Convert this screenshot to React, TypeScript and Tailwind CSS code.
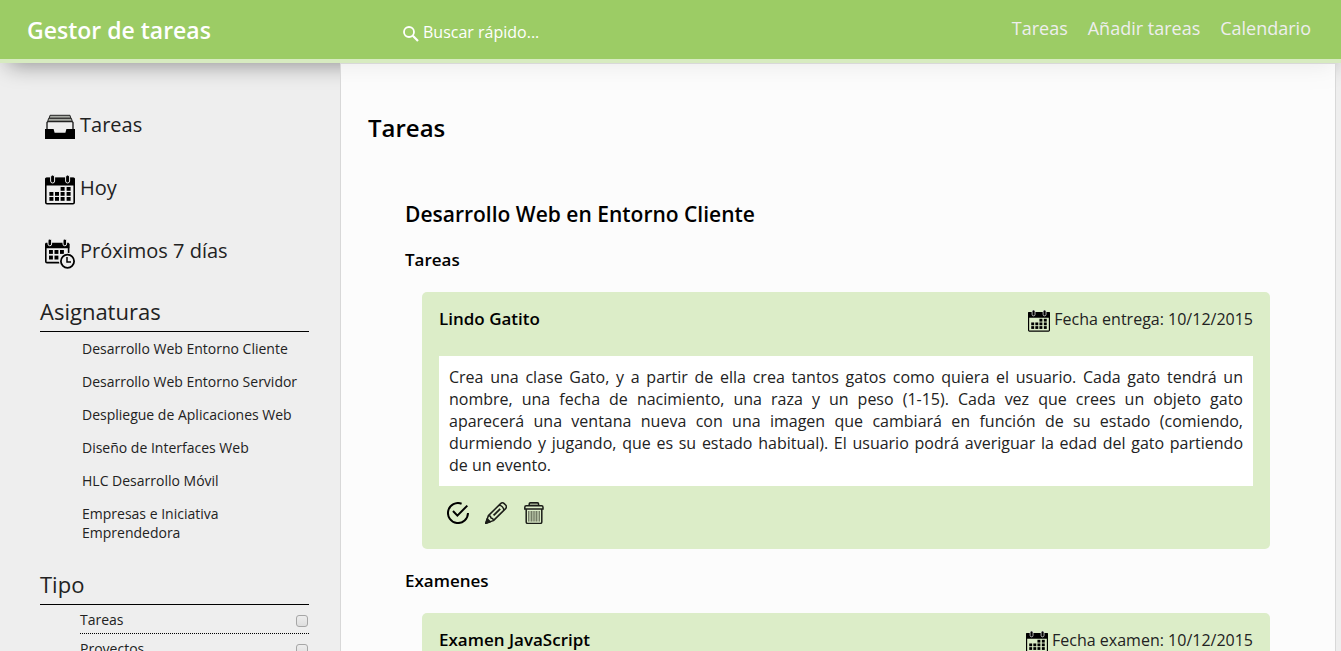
import React from "react";

type IconProps = { className?: string };

function CalendarIcon({ className }: IconProps) {
  const dots = [
    [15.6, 12], [21.6, 12],
    [4.4, 17], [10, 17], [15.6, 17], [21.6, 17],
    [4.4, 22], [10, 22], [15.6, 22], [21.6, 22],
  ];
  return (
    <svg viewBox="0 0 30 30" className={className} aria-hidden="true">
      <rect x="0.8" y="3.5" width="28.4" height="25.2" rx="1.2" fill="none" stroke="#000" strokeWidth="1.6" />
      <path d="M0 10.6V4.2C0 3.2.8 2.6 1.6 2.6h26.8c.9 0 1.6.7 1.6 1.6v6.4z" />
      <rect x="5.6" y="0" width="4" height="8" rx="2" stroke="#eee" strokeWidth="1" />
      <rect x="20.6" y="0" width="4" height="8" rx="2" stroke="#eee" strokeWidth="1" />
      {dots.map(([x, y]) => (
        <rect key={`${x}-${y}`} x={x} y={y} width="4" height="3.8" />
      ))}
    </svg>
  );
}

function WeekIcon({ className }: IconProps) {
  const dots = [[4, 11], [9.5, 11], [15, 11], [4, 16.6], [9.5, 16.6]];
  return (
    <svg viewBox="0 -1 30 30" className={className} overflow="visible" aria-hidden="true">
      <path d="M15 23.6H2A1.2 1.2 0 0 1 .8 22.4V5M23.6 5v9" fill="none" stroke="#000" strokeWidth="1.6" />
      <path d="M0 9.3V5.2c0-.8.6-1.4 1.4-1.4H23c.8 0 1.4.6 1.4 1.4v4.1z" />
      <rect x="3" y="0" width="3.6" height="6.8" rx="1.8" stroke="#eee" />
      <rect x="18" y="0" width="3.6" height="6.8" rx="1.8" stroke="#eee" />
      {dots.map(([x, y]) => (
        <rect key={`${x}-${y}`} x={x} y={y} width="3.9" height="3.9" />
      ))}
      <circle cx="22.5" cy="22.3" r="8.6" fill="#eee" />
      <circle cx="22.5" cy="22.3" r="6.6" fill="none" stroke="#000" strokeWidth="1.8" />
      <path d="M22 18v5h4" fill="none" stroke="#000" strokeWidth="1.5" />
    </svg>
  );
}

function InboxIcon({ className }: IconProps) {
  return (
    <svg viewBox="0 0 30 30" className={className} aria-hidden="true">
      <path d="M5 3.3h20l.8 3H4.2z" fill="#a8aba4" stroke="#222" strokeWidth="1" />
      <path d="M3.6 6.3h22.8l.9 3.4H2.7z" fill="#a8aba4" stroke="#222" strokeWidth="1" />
      <path d="M2 18V10.5l1-1h24l1 1V18" fill="#eee" stroke="#222" strokeWidth="1.4" />
      <path d="M0 17h8.6l1 3.8h10.8l1-3.8H30V27H0z" />
    </svg>
  );
}

function SearchIcon({ className }: IconProps) {
  return (
    <svg viewBox="0 0 16 16" className={className} fill="none" stroke="#fff" aria-hidden="true">
      <circle cx="6" cy="6" r="5" strokeWidth="1.8" />
      <path d="M9.8 9.8l5.2 5.2" strokeWidth="2.2" />
    </svg>
  );
}

function CheckIcon({ className }: IconProps) {
  return (
    <svg viewBox="0 0 22 22" className={className} fill="none" stroke="#000" strokeWidth="2" aria-hidden="true">
      <path d="M14.6 1.7A10 10 0 1 0 21 11" />
      <path d="M6 9l4.4 4.6L20.3 3.6" />
    </svg>
  );
}

function PencilIcon({ className }: IconProps) {
  return (
    <svg viewBox="0 0 22 22" className={className} fill="none" stroke="#1b1d18" strokeWidth="1.5" strokeLinejoin="round" aria-hidden="true">
      <path d="M.8 21.2l2.6-7.6L15.6 1.6c1-1 2.6-1 3.6 0l1.4 1.4c1 1 1 2.6 0 3.6L8.4 18.6z" />
      <path d="M3.4 13.6l2 .6.6 1.8 1.8.6.6 2M14 3.2c2.4.2 4.6 2.4 4.8 4.8" />
      <path d="M8.6 13.4l6.6-6.6" strokeWidth="1.8" />
      <path d="M.8 21.2l1.4-4.4 3 3z" fill="#1b1d18" />
    </svg>
  );
}

function TrashIcon({ className }: IconProps) {
  return (
    <svg viewBox="0 0 22 22" className={className} fill="none" stroke="#1b1d18" strokeWidth="1.5" aria-hidden="true">
      <path d="M6.2 3.8V2c0-.7.5-1.2 1.2-1.2h7c.7 0 1.2.5 1.2 1.2v1.8" fill="#98a38a" />
      <path d="M1.8 7V5.2c0-.9.6-1.4 1.4-1.4h15.4c.9 0 1.4.6 1.4 1.4V7z" />
      <path d="M3.2 7v13c0 .8.6 1.4 1.4 1.4h12.8c.8 0 1.4-.6 1.4-1.4V7" />
      <rect x="5" y="9" width="12" height="10.6" fill="#a9b599" stroke="none" />
      <path d="M5.5 9v10.4M8.5 9v10.4M11 9v10.4M13.5 9v10.4M16.5 9v10.4" stroke="#747d67" strokeWidth="1" />
    </svg>
  );
}

const shortcuts = [
  { label: "Tareas", Icon: InboxIcon },
  { label: "Hoy", Icon: CalendarIcon },
  { label: "Próximos 7 días", Icon: WeekIcon },
];

const subjects = [
  "Desarrollo Web Entorno Cliente",
  "Desarrollo Web Entorno Servidor",
  "Despliegue de Aplicaciones Web",
  "Diseño de Interfaces Web",
  "HLC Desarrollo Móvil",
  "Empresas e Iniciativa Emprendedora",
];

const types = ["Tareas", "Proyectos"];

type TaskProps = { title: string; dateLabel: string; children?: React.ReactNode };

function TaskCard({ title, dateLabel, children }: TaskProps) {
  return (
    <article className="mt-5 ml-[17px] rounded-[5px] bg-[#dcedc8] px-[17px] pt-4 pb-[25px]">
      <header className="flex h-[22px] items-start justify-between leading-[22px]">
        <h4 className="text-[17px] font-semibold text-black">{title}</h4>
        <p className="flex gap-1">
          <CalendarIcon className="mt-0.5 size-[22px]" />
          {dateLabel}
        </p>
      </header>
      {children && (
        <p className="mt-[26px] bg-white p-2.5 text-justify leading-[22px]">{children}</p>
      )}
      <div className="mt-4 flex gap-4 pl-2">
        <button type="button" aria-label="Completar"><CheckIcon className="size-[22px]" /></button>
        <button type="button" aria-label="Editar"><PencilIcon className="size-[22px]" /></button>
        <button type="button" aria-label="Borrar"><TrashIcon className="size-[22px]" /></button>
      </div>
    </article>
  );
}

export default function App() {
  return (
    <div className="flex h-screen flex-col overflow-hidden bg-[#eee] font-['Open_Sans',sans-serif] text-base font-normal text-[#222]">
      <header className="flex h-[63px] shrink-0 items-center border-b-4 border-[#d7ebc0] bg-[#9ccc65] pr-[30px] shadow-[0_10px_22px_-8px_rgba(0,0,0,0.4)]">
        <div className="w-[403px] pl-[27px] text-[23px] leading-8 font-semibold text-white">Gestor de tareas</div>
        <label className="flex items-center gap-1 pt-1">
          <SearchIcon className="mt-1 size-4" />
          <input
            type="search"
            aria-label="Buscar"
            placeholder="Buscar rápido..."
            className="w-48 bg-transparent text-white outline-none placeholder:text-white placeholder:opacity-100"
          />
        </label>
        <nav className="ml-auto flex gap-5 pb-1 text-lg text-[#eee]">
          <a href="#tareas">Tareas</a>
          <a href="#nueva">Añadir tareas</a>
          <a href="#calendario">Calendario</a>
        </nav>
      </header>

      <div className="flex min-h-0 flex-1">
        <aside className="w-[340px] shrink-0 overflow-y-auto pt-[49px] pr-[31px] pl-10 [scrollbar-width:none]">
          <ul className="flex flex-col gap-[33px] pl-[5px]">
            {shortcuts.map(({ label, Icon }) => (
              <li key={label}>
                <a href="#lista" className="flex gap-[5px] text-xl leading-[26px]">
                  <Icon className="size-[30px]" />
                  {label}
                </a>
              </li>
            ))}
          </ul>
          <h2 className="mt-7 border-b border-black pb-[5px] text-[22px] leading-[30px]">Asignaturas</h2>
          <ul className="mt-[7px] flex flex-col gap-3.5 pl-[42px] text-sm leading-[19px]">
            {subjects.map((name) => (
              <li key={name}><a href="#asignatura">{name}</a></li>
            ))}
          </ul>
          <h2 className="mt-[27px] border-b border-black pb-[5px] text-[22px] leading-[30px]">Tipo</h2>
          <ul className="pl-10 text-sm">
            {types.map((name) => (
              <li key={name} className="border-b border-dotted border-black">
                <label className="flex h-7 items-center justify-between pt-0.5 pr-px">
                  {name}
                  <input
                    type="checkbox"
                    className="mt-0.5 size-3 appearance-none rounded-[3px] border border-[#a6a6a6] bg-linear-to-b from-[#ededed] to-[#dedede] checked:from-[#9ccc65] checked:to-[#9ccc65]"
                  />
                </label>
              </li>
            ))}
          </ul>
        </aside>

        <main className="mr-[5px] min-w-0 flex-1 overflow-y-auto border border-b-0 border-[#d8d8d8] bg-white/80 pt-12 pr-[65px] pl-[27px] [scrollbar-width:none]">
          <h1 className="text-2xl leading-8 font-semibold text-black">Tareas</h1>
          <section className="mt-14 pl-[37px]">
            <h2 className="text-[21px] leading-7 font-semibold text-black">Desarrollo Web en Entorno Cliente</h2>
            <h3 className="mt-5 text-[17px] leading-6 font-semibold text-black">Tareas</h3>
            <TaskCard title="Lindo Gatito" dateLabel="Fecha entrega: 10/12/2015">
              <span className="block [text-align-last:justify]">
                Crea una clase Gato, y a partir de ella crea tantos gatos como quiera el usuario. Cada gato tendrá un
                <br />
                nombre, una fecha de nacimiento, una raza y un peso (1-15). Cada vez que crees un objeto gato
                <br />
                aparecerá una ventana nueva con una imagen que cambiará en función de su estado (comiendo,
                <br />
                durmiendo y jugando, que es su estado habitual). El usuario podrá averiguar la edad del gato partiendo
              </span>
              de un evento.
            </TaskCard>
            <h3 className="mt-5 text-[17px] leading-6 font-semibold text-black">Examenes</h3>
            <TaskCard title="Examen JavaScript" dateLabel="Fecha examen: 10/12/2015" />
          </section>
        </main>
      </div>
    </div>
  );
}
